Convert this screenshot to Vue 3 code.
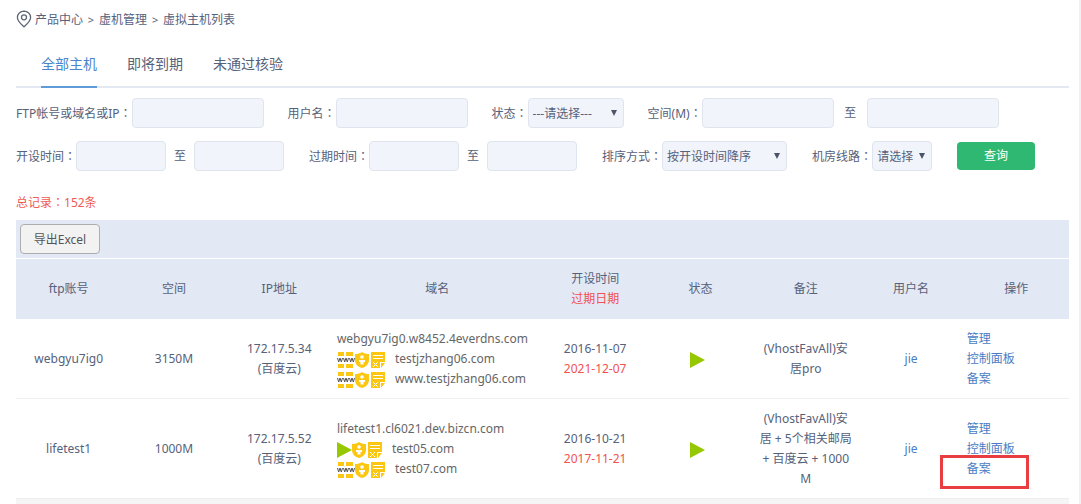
<script setup>
import { ref } from 'vue'

const tabs = ['全部主机', '即将到期', '未通过核验']
const activeTab = ref(0)

const form = ref({
  account: '', user: '', status: '---请选择---', spaceMin: '', spaceMax: '',
  openFrom: '', openTo: '', endFrom: '', endTo: '', sort: '按开设时间降序', line: '请选择',
})

const hosts = [
  {
    ftp: 'webgyu7ig0', space: '3150M', ip: '172.17.5.34', provider: '(百度云)',
    domain: 'webgyu7ig0.w8452.4everdns.com',
    aliases: [
      { name: 'testjzhang06.com', running: false },
      { name: 'www.testjzhang06.com', running: false },
    ],
    opened: '2016-11-07', expires: '2021-12-07',
    notes: ['(VhostFavAll)安', '居pro'], user: 'jie',
  },
  {
    ftp: 'lifetest1', space: '1000M', ip: '172.17.5.52', provider: '(百度云)',
    domain: 'lifetest1.cl6021.dev.bizcn.com',
    aliases: [
      { name: 'test05.com', running: true },
      { name: 'test07.com', running: false },
    ],
    opened: '2016-10-21', expires: '2017-11-21',
    notes: ['(VhostFavAll)安', '居 + 5个相关邮局', '+ 百度云 + 1000', 'M'], user: 'jie',
    marked: true,
  },
]
</script>

<template>
  <div class="page">
    <nav class="crumbs" aria-label="breadcrumb">
      <svg class="pin" viewBox="0 0 16 18" aria-hidden="true">
        <path d="M8 1.2C4.2 1.2 1.4 3.9 1.4 7.4c0 3.8 3.5 6.3 6.6 9.4 3.1-3.1 6.6-5.6 6.6-9.4 0-3.5-2.8-6.2-6.6-6.2z" />
        <circle cx="8" cy="7.3" r="2.5" />
      </svg>
      <a href="#">产品中心</a><span class="sep">&gt;</span>
      <a href="#">虚机管理</a><span class="sep">&gt;</span>
      <span>虚拟主机列表</span>
    </nav>

    <div class="tabs" role="tablist">
      <button
        v-for="(t, i) in tabs" :key="t" type="button" role="tab"
        class="tab" :class="{ active: i === activeTab }"
        :aria-selected="i === activeTab" @click="activeTab = i"
      >{{ t }}</button>
    </div>

    <form class="filters" @submit.prevent>
      <div class="line">
        <div class="field">
          <label for="account">FTP帐号或域名或IP<span class="colon">：</span></label>
          <input id="account" v-model="form.account" class="wide" type="text">
        </div>
        <div class="field">
          <label for="user">用户名<span class="colon">：</span></label>
          <input id="user" v-model="form.user" class="wide" type="text">
        </div>
        <div class="field">
          <label for="status">状态<span class="colon">：</span></label>
          <div class="pick pick-status">
            <select id="status" v-model="form.status"><option>---请选择---</option></select>
            <svg class="caret" viewBox="0 0 6 6" aria-hidden="true"><path d="M0 0h6L3 6z" /></svg>
          </div>
        </div>
        <div class="field">
          <label for="space-min">空间(M)<span class="colon">：</span></label>
          <input id="space-min" v-model="form.spaceMin" class="wide" type="text">
          <label class="to to-wide" for="space-max">至</label>
          <input id="space-max" v-model="form.spaceMax" class="wide" type="text">
        </div>
      </div>
      <div class="line dates">
        <div class="field">
          <label for="open-from">开设时间<span class="colon">：</span></label>
          <input id="open-from" v-model="form.openFrom" class="date" type="text">
          <label class="to" for="open-to">至</label>
          <input id="open-to" v-model="form.openTo" class="date" type="text">
        </div>
        <div class="field">
          <label for="end-from">过期时间<span class="colon">：</span></label>
          <input id="end-from" v-model="form.endFrom" class="date" type="text">
          <label class="to" for="end-to">至</label>
          <input id="end-to" v-model="form.endTo" class="date" type="text">
        </div>
        <div class="field">
          <label for="sort">排序方式<span class="colon">：</span></label>
          <div class="pick pick-sort">
            <select id="sort" v-model="form.sort"><option>按开设时间降序</option></select>
            <svg class="caret" viewBox="0 0 6 6" aria-hidden="true"><path d="M0 0h6L3 6z" /></svg>
          </div>
        </div>
        <div class="field">
          <label for="room">机房线路<span class="colon">：</span></label>
          <div class="pick pick-room">
            <select id="room" v-model="form.line"><option>请选择</option></select>
            <svg class="caret" viewBox="0 0 6 6" aria-hidden="true"><path d="M0 0h6L3 6z" /></svg>
          </div>
        </div>
        <button class="search" type="submit">查询</button>
      </div>
    </form>

    <p class="total">总记录<span class="colon">：</span>152条</p>

    <div class="toolbar"><button class="export" type="button">导出Excel</button></div>

    <table class="hosts">
      <colgroup>
        <col><col><col><col class="col-domain"><col><col><col><col><col>
      </colgroup>
      <thead>
        <tr>
          <th>ftp账号</th><th>空间</th><th>IP地址</th><th>域名</th>
          <th>开设时间<div class="red">过期日期</div></th>
          <th>状态</th><th>备注</th><th>用户名</th><th>操作</th>
        </tr>
      </thead>
      <tbody>
        <tr v-for="h in hosts" :key="h.ftp">
          <td>{{ h.ftp }}</td>
          <td>{{ h.space }}</td>
          <td>{{ h.ip }}<div>{{ h.provider }}</div></td>
          <td class="domains">
            <div>{{ h.domain }}</div>
            <div v-for="a in h.aliases" :key="a.name" class="alias">
              <svg v-if="a.running" class="play" viewBox="0 0 15 16" aria-hidden="true"><path d="M0 0l15 8L0 16z" /></svg>
              <svg v-else class="www" viewBox="0 0 18 16" aria-hidden="true">
                <path class="gold" d="M1 0h6v4H1zM9 0h7v4H9zM1 12h6v4H1zM9 12h7v4H9z" />
                <path class="ink" d="M.5 6l1.2 4 1.3-4 1.3 4 1.2-4M6.5 6l1.2 4L9 6l1.3 4 1.2-4M12.5 6l1.2 4L15 6l1.3 4 1.2-4" />
              </svg>
              <svg class="shield" viewBox="0 0 14 16" aria-hidden="true">
                <path class="gold" d="M7 0c2 1.5 4.5 2 7 2v6c0 4-3 7-7 8-4-1-7-4-7-8V2c2.5 0 5-.5 7-2z" />
                <circle class="hole" cx="7" cy="5" r="1.8" />
                <path class="hole" d="M4 8h6v2H8.5v2.5h-3V10H4z" />
              </svg>
              <svg class="note" viewBox="0 0 14 16" aria-hidden="true">
                <path class="gold" d="M0 0h14v10H9v6H0zM10 11h4l-4 5z" />
                <path class="cut" d="M2 3.5h10M2 6.5h10M2 10l5 5M7 10l-5 5" />
              </svg>
              <span class="alias-name">{{ a.name }}</span>
            </div>
          </td>
          <td>{{ h.opened }}<div class="red">{{ h.expires }}</div></td>
          <td class="state"><svg class="play" viewBox="0 0 15 16" role="img" aria-label="运行中"><path d="M0 0l15 8L0 16z" /></svg></td>
          <td><div v-for="n in h.notes" :key="n">{{ n }}</div></td>
          <td><a href="#">{{ h.user }}</a></td>
          <td class="actions">
            <div><a href="#">管理</a></div>
            <div><a href="#">控制面板</a></div>
            <div :class="{ marked: h.marked }"><a href="#">备案</a></div>
          </td>
        </tr>
      </tbody>
    </table>
    <div class="footer-bar"></div>
  </div>
</template>

<style>
body { background: #fff; }
</style>

<style scoped>
.page {
  box-sizing: border-box;
  display: flex;
  flex-direction: column;
  min-height: 100vh;
  padding: 8px 10px 0 16px;
  border-right: 2px solid #f1f1f3;
  font: 12px/20px "Noto Sans", "Noto Sans CJK SC", sans-serif;
  color: #56617a;
}
.page *, .marked::after { box-sizing: border-box; }
a { color: #4a7dc4; text-decoration: none; }
button, input, select { font: inherit; color: inherit; margin: 0; }
.colon { font-family: "Noto Sans CJK TC", sans-serif; }
.red { color: #f0524f; }

.crumbs { display: flex; align-items: center; height: 22px; }
.crumbs a, .crumbs span { padding-top: 1px; }
.crumbs a { color: inherit; }
.crumbs .sep { width: 16px; text-align: center; font-size: 11px; }
.pin { width: 16px; height: 18px; margin-right: 3px; fill: none; stroke: #5d6577; stroke-width: 1.3; }

.tabs {
  display: flex;
  gap: 30px;
  margin-top: 10px;
  padding-left: 25px;
  border-bottom: 2px solid #e4e8f3;
}
.tab {
  height: 48px;
  margin-bottom: -2px;
  padding: 2px 0 0;
  border: 0;
  border-bottom: 2px solid transparent;
  background: none;
  font-size: 14px;
  cursor: pointer;
}
.tab.active { color: #4a86cc; border-bottom-color: #5f9bd8; }

.filters { display: flex; flex-direction: column; gap: 13px; margin-top: 10px; }
.line { display: flex; align-items: center; gap: 24px; white-space: nowrap; }
.dates { gap: 25px; }
.field { display: flex; align-items: center; }
input, select {
  height: 30px;
  border: 1px solid #dfe4ee;
  border-radius: 4px;
  background: #f1f4fa;
}
.wide { width: 132px; }
.date { width: 90px; }
.to { width: 28px; text-align: center; }
.to-wide { width: 33px; }
.pick { position: relative; }
.pick select { display: block; width: 100%; padding: 1px 4px 0; appearance: none; }
.pick-status { width: 96px; }
.pick-sort { width: 125px; }
.pick-room { width: 60px; }
.caret { position: absolute; top: 12px; right: 7px; width: 6px; height: 6px; fill: #4b5468; pointer-events: none; }
.search {
  width: 78px;
  height: 28px;
  padding: 0;
  border: 0;
  border-radius: 4px;
  background: #2eb872;
  color: #fff;
  cursor: pointer;
}

.total { margin: 21px 0 7px; color: #ef5b55; }

.toolbar { padding: 4px; border-bottom: 1px solid #fff; background: #e2e9f4; line-height: 0; }
.export {
  width: 80px;
  height: 30px;
  padding: 1px 0 0;
  border: 1px solid #adadad;
  border-radius: 4px;
  background: #f2f2f2;
  color: #555;
  cursor: pointer;
}

.hosts { width: 100%; table-layout: fixed; border-collapse: collapse; }
.col-domain { width: 20%; }
th { padding: 10px 0; background: #e2e8f4; font-weight: 400; }
td { padding: 10px 0 9px; border-bottom: 1px solid #eceef1; text-align: center; white-space: nowrap; }
td.domains { padding-left: 5px; text-align: left; color: #666; }
td.actions { padding-left: 3px; text-align: left; }
td.state { padding-right: 6px; }
.alias { display: flex; align-items: center; height: 20px; }
.alias svg { margin-top: 2px; }
.www { width: 18px; height: 16px; }
.play { width: 15px; height: 16px; fill: #95c800; }
.shield { width: 14px; height: 16px; }
.alias .note { width: 14px; height: 16px; margin-left: 2px; }
.alias-name { margin-left: 10px; }
.gold { fill: #fbc712; }
.hole { fill: #fff; }
.ink { fill: none; stroke: #555; }
.cut { fill: none; stroke: #fff; }
.state .play { display: block; margin: 2px auto 0; }
.marked { position: relative; }
.marked::after {
  content: "";
  position: absolute;
  top: -4px;
  left: -27px;
  width: 89px;
  height: 34px;
  border: 3px solid #e83e42;
  pointer-events: none;
}
.footer-bar { flex: 1; background: #f5f5f5; }
</style>
